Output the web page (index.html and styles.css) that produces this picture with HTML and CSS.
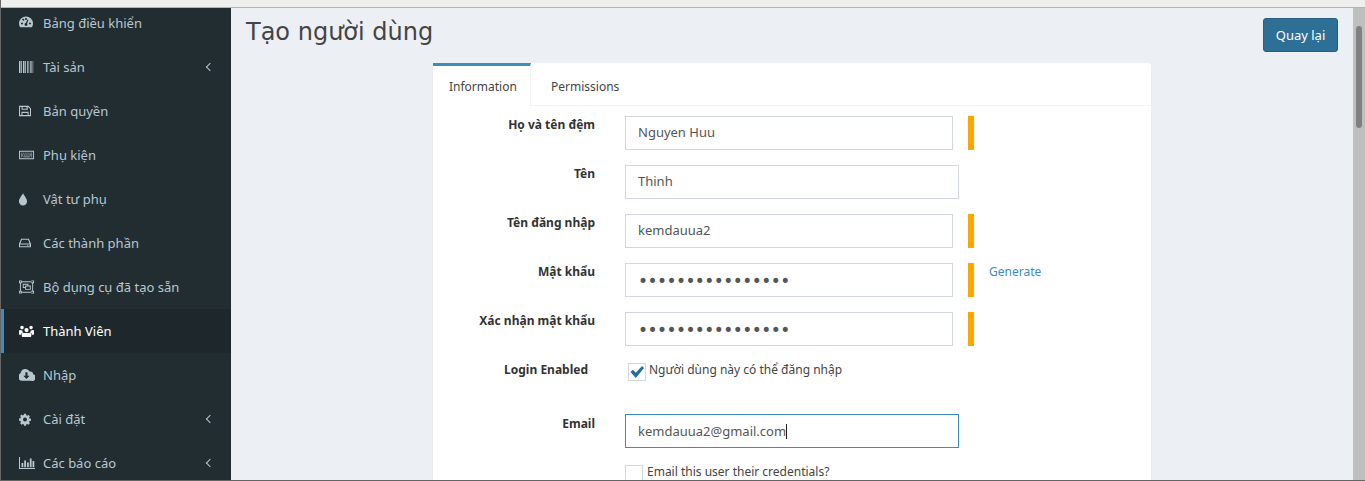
FILE: index.html
```html
<!DOCTYPE html>
<html lang="vi">
<head>
  <meta charset="UTF-8">
  <title>Tạo người dùng</title>
  <link rel="stylesheet" href="styles.css">
</head>
<body>
  <div class="topstrip"></div>
  <div class="app">
    <aside class="sidebar">
      <ul class="menu">
        <li><svg class="ico" viewBox="1 1 16 16"><path fill-rule="evenodd" d="M8 2.500a7 7 0 0 0-7 7c0 1.400.4 2.700 1.100 3.800h11.800A7 7 0 0 0 15 9.500a7 7 0 0 0-7-7zM7.200 4h1.600v2H7.200zM3 8.800h2v1.500H3zm8 0h2v1.500h-2zM4 5.500l1.300-1 1.200 1.500-1.200 1zM9.500 10.500a1.500 1.500 0 1 1-1.700-1.500l1.700-3.500 1 .4-1.400 3.600c.3.200.4.600.4 1z"/></svg><span>Bảng điều khiển</span></li>
        <li><svg class="ico" viewBox="1 0 16 16"><path d="M1 2h1.500v12H1zM3.200 2h.8v12h-.8zM5 2h1.500v12H5zM7.200 2h.8v12h-.8zM9 2h.8v12H9zM10.500 2h.7v12h-.7zM12 2h.7v12H12zM13.400 2h.6v12h-.6zM14.600 2h.6v12h-.6z"/></svg><span>Tài sản</span><i class="chev"></i></li>
        <li><svg class="ico" viewBox="1 -1.330 18.670 18.670"><path fill-rule="evenodd" d="M1 2h11l3 3v9H1zm1.200 1.200v9.600h1.600V9h8.400v3.800h1.600V5.500l-2.300-2.300h-.3v3.300H4V3.200zm3 0v2.100h4.600V3.200zM5 10.200v2.600h6v-2.600z"/></svg><span>Bản quyền</span></li>
        <li><svg class="ico" viewBox="0 -.5 17 17"><path fill-rule="evenodd" d="M0 3.500h16v9H0zm1 1v7h14v-7zM2 5.500h1.200v1H2zm2 0h1.200v1H4zm2 0h1.200v1H6zm2 0h1.200v1H8zm2 0h1.200v1H10zm2 0h2v1h-2zM2 7.500h2.200v1H2zm3 0h1.200v1H5zm2 0h1.200v1H7zm2 0h1.200v1H9zm2 0h3v1h-3zM2 9.500h1.500v1H2zm2.500 0h7v1h-7zm8 0H14v1h-1.500z"/></svg><span>Phụ kiện</span></li>
        <li><svg class="ico" viewBox="4 0 16 16"><path d="M8 2c.6 2.300 4 5.200 4 8.200A4.100 4.100 0 0 1 8 14.500a4.100 4.100 0 0 1-4-4.300C4 7.200 7.400 4.300 8 2z"/></svg><span>Vật tư phụ</span></li>
        <li><svg class="ico" viewBox="1 -1.330 18.670 18.670"><path fill-rule="evenodd" d="M3.500 3h9L15 9v4H1V9zm.8 1.200L2.700 8.500h10.600l-1.600-4.300zM2.200 9.700v2.100h11.600V9.700zM10.500 10.200h1v1h-1zm1.800 0h1v1h-1z"/></svg><span>Các thành phần</span></li>
        <li><svg class="ico" viewBox="0 -.5 17 17"><path fill-rule="evenodd" d="M0 1h3v1h10V1h3v3h-1v8h1v3h-3v-1H3v1H0v-3h1V4H0zm1 1v1h1V2zm12 0v1h2V2zm-10 1v1H2v8h1v1h10v-1h1V4h-1V3zM1 13v1h1v-1zm12 0v1h2v-1zM4 4.500h6v2h2.500V11H6.500V9H4zm1 1V8h1.500V6.500H9v-1zm2.500 2V10h4V7.500z"/></svg><span>Bộ dụng cụ đã tạo sẵn</span></li>
        <li class="active"><svg class="ico" viewBox="0 -.5 17 17"><path d="M8 4.800a2.200 2.200 0 1 1 0 4.400 2.200 2.200 0 0 1 0-4.400zM3.200 2.500a1.900 1.900 0 1 1 0 3.800 1.900 1.900 0 0 1 0-3.800zm9.600 0a1.900 1.900 0 1 1 0 3.800 1.900 1.900 0 0 1 0-3.800zM4.500 9.800c.8.500 1 .4 3.500.4s2.700.1 3.500-.4c1.300 0 1.600 1.500 1.600 3.200 0 1-.6 1.500-1.500 1.500H4.400c-.9 0-1.500-.5-1.500-1.500 0-1.700.3-3.200 1.600-3.200zM.2 7.500c.3-.7 1-.6 1.700-.3.600.3 1.200.3 1.500.3.100.8.400 1.500 1 2-1.300.3-2 1.200-2.200 2.500H1C.3 12 0 11.500 0 10.800zm15.600 0c-.3-.7-1-.6-1.700-.3-.6.3-1.200.3-1.500.3-.1.800-.4 1.500-1 2 1.300.3 2 1.200 2.200 2.500H15c.7 0 1-.5 1-1.200z"/></svg><span>Thành Viên</span></li>
        <li><svg class="ico" viewBox="1 .5 15 15"><path fill-rule="evenodd" d="M4 13.500A3.700 3.700 0 0 1 2.500 6.400 4.500 4.500 0 0 1 11 4.800a3 3 0 0 1 3.300 2.600A3.100 3.100 0 0 1 12.500 13.500zM7 5.500v3.300H5l3 3 3-3H9V5.500z"/></svg><span>Nhập</span></li>
        <li><svg class="ico" viewBox=".5 -2 20 20"><path fill-rule="evenodd" d="M6.800 1.500h2.400l.4 1.900 1.200.5 1.600-1 1.700 1.700-1 1.600.5 1.200 1.900.4v2.400l-1.900.4-.5 1.200 1 1.600-1.700 1.700-1.600-1-1.200.5-.4 1.900H6.800l-.4-1.900-1.200-.5-1.600 1-1.700-1.700 1-1.600-.5-1.200-1.900-.4V7.400l1.900-.4.500-1.200-1-1.600 1.700-1.700 1.600 1 1.200-.5zM8 6a2.500 2.500 0 1 0 0 5 2.500 2.500 0 0 0 0-5z"/></svg><span>Cài đặt</span><i class="chev"></i></li>
        <li><svg class="ico" viewBox="0 0 16 16"><path d="M0 2h1v11h15v1H0zM2.500 8h1.800v4.300H2.500zM5.200 5.500H7v6.800H5.200zM8 7.500h1.800v4.800H8zM10.800 3.500h1.800v8.800h-1.800zM13.500 6h1.800v6.300h-1.800z"/></svg><span>Các báo cáo</span><i class="chev"></i></li>
      </ul>
    </aside>

    <main class="content">
      <header class="page-head">
        <h1>Tạo người dùng</h1>
        <a class="btn-back">Quay lại</a>
      </header>

      <section class="card">
        <div class="tabs">
          <a class="tab active">Information</a>
          <a class="tab">Permissions</a>
        </div>
        <form class="form">
          <div class="row">
            <label>Họ và tên đệm</label>
            <input class="field short" type="text" value="Nguyen Huu">
            <b class="req"></b>
          </div>
          <div class="row">
            <label>Tên</label>
            <input class="field" type="text" value="Thinh">
          </div>
          <div class="row">
            <label>Tên đăng nhập</label>
            <input class="field short" type="text" value="kemdauua2">
            <b class="req"></b>
          </div>
          <div class="row">
            <label>Mật khẩu</label>
            <input class="field short" type="password" value="aaaaaaaaaaaaaaaa">
            <b class="req"></b>
            <a class="generate">Generate</a>
          </div>
          <div class="row">
            <label>Xác nhận mật khẩu</label>
            <input class="field short" type="password" value="aaaaaaaaaaaaaaaa">
            <b class="req"></b>
          </div>
          <div class="row row-check">
            <label class="label-login">Login Enabled</label>
            <span class="box checked"><svg viewBox="0 0 16 16"><path d="M1.500 8l2.300-2.200 3 3L13 2l2 2-8.200 10z"/></svg></span>
            <span class="check-text">Người dùng này có thể đăng nhập</span>
          </div>
          <div class="row row-email">
            <label>Email</label>
            <div class="field focus">kemdauua2@gmail.com<i class="caret"></i></div>
          </div>
          <div class="row row-mail">
            <span class="box"></span>
            <span class="mail-text">Email this user their credentials?</span>
          </div>
        </form>
      </section>
    </main>

    <div class="scrollbar"><div class="thumb"></div></div>
  </div>
</body>
</html>
```

FILE: styles.css
```css
* { box-sizing: border-box; }
html, body { margin: 0; height: 481px; overflow: hidden; }
body { font-family: "Noto Sans", sans-serif; font-size: 13px; color: #444; background: #ecf0f5; border-left: 1px solid #666; border-bottom: 1px solid #666; display: flex; flex-direction: column; }

.topstrip { height: 8px; flex: none; background: #efefed; border-bottom: 1px solid #b5b5b3; }
.app { flex: 1; display: flex; min-height: 0; }

.sidebar { width: 230px; flex: none; background: #222d32; overflow: hidden; }
.menu { list-style: none; margin: -7px 0 0; padding: 0; }
.menu li { height: 44px; display: flex; align-items: center; padding-left: 18px; color: #b8c7ce; position: relative; }
.menu li span { margin-left: 8px; }
.menu .ico { width: 16px; height: 16px; fill: #b8c7ce; flex: none; }
.menu .active { background: #1e282c; color: #fff; border-left: 3px solid #3c8dbc; padding-left: 15px; }
.menu .active .ico { fill: #fff; }
.chev { position: absolute; left: 206px; top: 19px; width: 6px; height: 6px; border-left: 1px solid #b8c7ce; border-bottom: 1px solid #b8c7ce; transform: rotate(45deg); }

.content { flex: 1; min-width: 0; overflow: hidden; }
.page-head { display: flex; justify-content: space-between; align-items: flex-start; padding: 10px 15px 0 15px; height: 55px; }
.page-head h1 { margin: 0; font-family: "DejaVu Sans", sans-serif; font-weight: 400; font-size: 24px; line-height: 28px; color: #444; }
.btn-back { height: 34px; width: 75px; display: flex; align-items: center; justify-content: center; background: #2e6f96; border: 1px solid #285f80; border-radius: 3px; color: #fff; }

.card { width: 718px; margin-left: 202px; height: 500px; background: #fff; box-shadow: 0 1px 1px rgba(0,0,0,0.1); border-radius: 3px; }
.tabs { display: flex; height: 43px; border-bottom: 1px solid #f4f4f4; font-size: 12px; }
.tab { height: 43px; padding: 0 20px; display: flex; align-items: center; border-top: 3px solid transparent; }
.tab.active { width: 98px; padding: 0 16px; background: #fff; border-top-color: #3c8dbc; border-right: 1px solid #f4f4f4; }

.form { padding-top: 10px; }
.row { display: flex; align-items: flex-start; margin-bottom: 15px; height: 34px; }
.row label { width: 162px; text-align: right; font-size: 12px; font-weight: 700; color: #333; line-height: 18px; flex: none; }
.field { width: 334px; height: 34px; margin: 0 0 0 30px; padding: 0 12px 2px; border: 1px solid #d2d6de; font-family: inherit; font-size: 13px; color: #555; display: block; background: #fff; outline: none; line-height: 30px; }
.field.short { width: 328px; }
.field[type="password"] { font-family: "DejaVu Sans", sans-serif; font-size: 17px; letter-spacing: -0.55px; padding-bottom: 0; padding-top: 1px; }
.field.focus { border-color: #3c8dbc; padding-bottom: 0; line-height: 32px; }
.caret { display: inline-block; width: 1px; height: 15px; background: #222; vertical-align: -3px; }
.req { width: 6px; height: 34px; background: #ffa500; margin-left: 15px; }
.generate { margin-left: 15px; color: #3c8dbc; font-size: 12px; line-height: 18px; }

.row-check { height: 36px; margin-bottom: 17px; }
.row-check .label-login { width: 155px; }
.box { width: 18px; height: 18px; flex: none; background: #fff; border: 1px solid #d2d6de; display: block; }
.box svg { width: 16px; height: 16px; fill: #1f6f9f; display: block; }
.row-check .box { margin: 2px 0 0 40px; }
.check-text { margin-left: 3px; font-size: 12px; line-height: 18px; }
.row-email label { margin-top: 1px; }
.row-mail { margin-top: 2px; }
.row-mail .box { margin: 2px 0 0 192px; }
.mail-text { margin-left: 4px; margin-top: 1px; font-size: 12px; line-height: 16px; }

.scrollbar { width: 12px; flex: none; background: #bfbfbf; padding: 18px 3px 0; }
.thumb { height: 102px; background: #808080; border-radius: 3px; }
```
